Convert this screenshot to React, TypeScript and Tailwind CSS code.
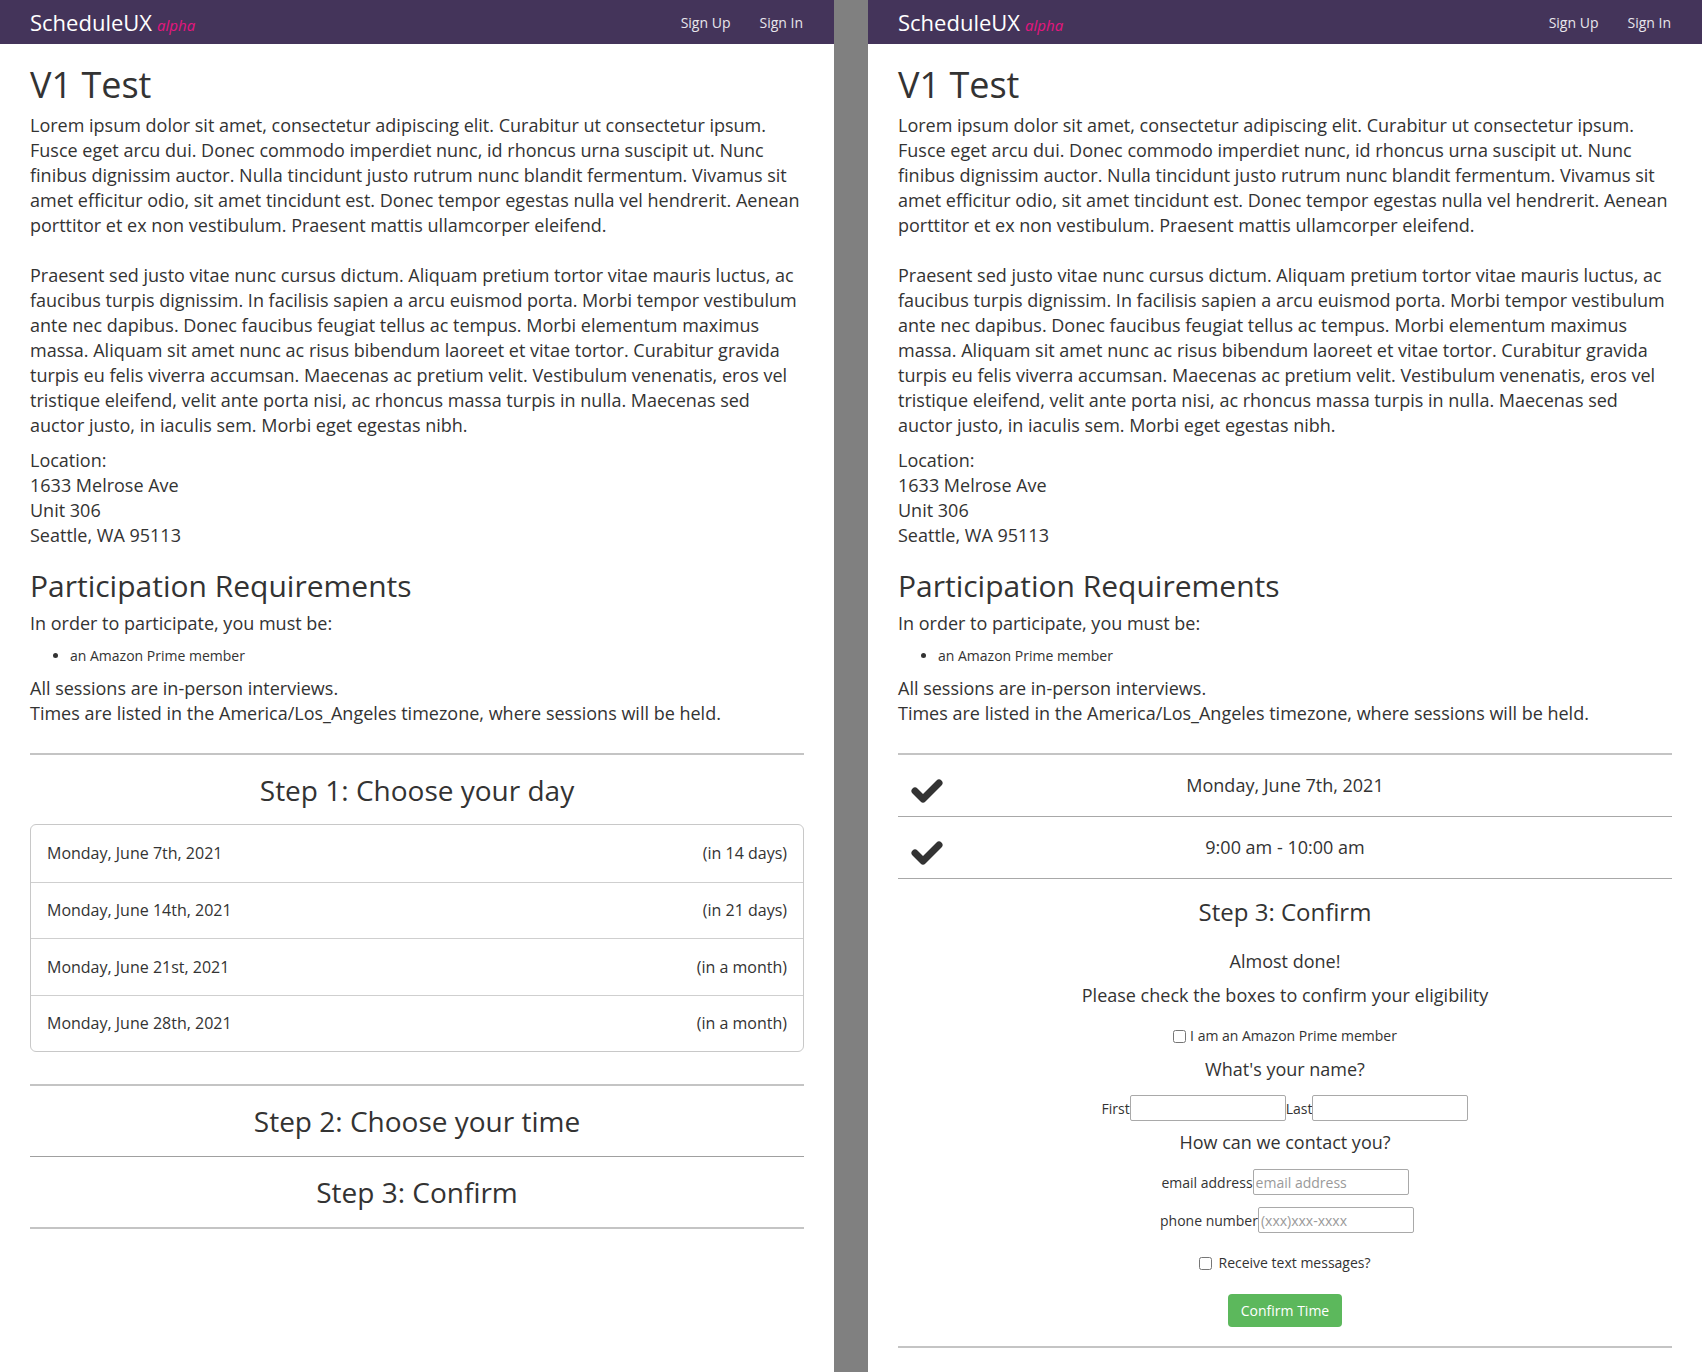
import React from "react";

const LOREM_1 =
  "Lorem ipsum dolor sit amet, consectetur adipiscing elit. Curabitur ut consectetur ipsum. Fusce eget arcu dui. Donec commodo imperdiet nunc, id rhoncus urna suscipit ut. Nunc finibus dignissim auctor. Nulla tincidunt justo rutrum nunc blandit fermentum. Vivamus sit amet efficitur odio, sit amet tincidunt est. Donec tempor egestas nulla vel hendrerit. Aenean porttitor et ex non vestibulum. Praesent mattis ullamcorper eleifend.";

const LOREM_2 =
  "Praesent sed justo vitae nunc cursus dictum. Aliquam pretium tortor vitae mauris luctus, ac faucibus turpis dignissim. In facilisis sapien a arcu euismod porta. Morbi tempor vestibulum ante nec dapibus. Donec faucibus feugiat tellus ac tempus. Morbi elementum maximus massa. Aliquam sit amet nunc ac risus bibendum laoreet et vitae tortor. Curabitur gravida turpis eu felis viverra accumsan. Maecenas ac pretium velit. Vestibulum venenatis, eros vel tristique eleifend, velit ante porta nisi, ac rhoncus massa turpis in nulla. Maecenas sed auctor justo, in iaculis sem. Morbi eget egestas nibh.";

const DAYS = [
  { day: "Monday, June 7th, 2021", rel: "(in 14 days)" },
  { day: "Monday, June 14th, 2021", rel: "(in 21 days)" },
  { day: "Monday, June 21st, 2021", rel: "(in a month)" },
  { day: "Monday, June 28th, 2021", rel: "(in a month)" },
];

function Navbar() {
  return (
    <div className="flex h-[44px] items-center justify-between bg-[#44345a] pl-[30px] pr-[31px]">
      <div className="flex items-baseline gap-[5px]">
        <span className="text-[22px] text-white">ScheduleUX</span>
        <span className="text-[15px] italic text-[#e6157f]">alpha</span>
      </div>
      <div className="flex items-center gap-[29px] text-[14px] text-[#e8e6ec]">
        <span>Sign Up</span>
        <span>Sign In</span>
      </div>
    </div>
  );
}

function Intro() {
  return (
    <>
      <h1 className="mt-[21px] text-[36px] leading-[40px]">V1 Test</h1>
      <p className="mt-[8px] text-[18px] leading-[25px]">{LOREM_1}</p>
      <p className="mt-[25px] text-[18px] leading-[25px]">{LOREM_2}</p>
      <div className="mt-[10px] text-[18px] leading-[25px]">
        <div>Location:</div>
        <div>1633 Melrose Ave</div>
        <div>Unit 306</div>
        <div>Seattle, WA 95113</div>
      </div>
      <h2 className="mt-[21px] text-[30px] leading-[33px]">Participation Requirements</h2>
      <p className="mt-[9px] text-[18px] leading-[25px]">In order to participate, you must be:</p>
      <ul className="mt-[10px] list-disc pl-[40px] text-[14px] leading-[20px]">
        <li>an Amazon Prime member</li>
      </ul>
      <div className="mt-[10px] text-[18px] leading-[25px]">
        <div>All sessions are in-person interviews.</div>
        <div>Times are listed in the America/Los_Angeles timezone, where sessions will be held.</div>
      </div>
      <div className="mt-[27px] border-t-2 border-[#c4c4c4]" />
    </>
  );
}

function Check() {
  return (
    <svg width="32" height="24" viewBox="0 0 32 24" className="text-[#333]">
      <polyline
        points="4,12 12,20 28,4"
        fill="none"
        stroke="currentColor"
        strokeWidth="7"
        strokeLinecap="round"
        strokeLinejoin="round"
      />
    </svg>
  );
}

function ChooseDay() {
  return (
    <div className="flex min-h-[1372px] flex-col bg-white">
      <Navbar />
      <div className="px-[30px]">
        <Intro />
        <h3 className="mt-[19px] text-center text-[28px] leading-[32px]">Step 1: Choose your day</h3>
        <div className="mt-[18px] overflow-hidden rounded-[6px] border border-[#c8c8c8]">
          {DAYS.map((d, i) => (
            <div
              key={d.day}
              className={`flex h-[56.5px] items-center justify-between px-[16px] text-[16px] ${
                i > 0 ? "border-t border-[#cfcfcf]" : ""
              }`}
            >
              <span>{d.day}</span>
              <span>{d.rel}</span>
            </div>
          ))}
        </div>
        <div className="mt-[32px] border-t-2 border-[#c4c4c4]" />
        <h3 className="py-[19px] text-center text-[28px] leading-[32px]">Step 2: Choose your time</h3>
        <div className="border-t border-[#a0a0a0]" />
        <h3 className="py-[19px] text-center text-[28px] leading-[32px]">Step 3: Confirm</h3>
        <div className="border-t-2 border-[#c4c4c4]" />
      </div>
    </div>
  );
}

function Field({ label, placeholder }: { label: string; placeholder?: string }) {
  return (
    <label className="flex items-center text-[14px]">
      <span>{label}</span>
      <input
        type="text"
        placeholder={placeholder}
        className="h-[26px] w-[156px] rounded-[2px] border border-[#a9a9a9] px-[2px] text-[14px] placeholder:text-[#9a9a9a]"
      />
    </label>
  );
}

function Confirm() {
  return (
    <div className="flex min-h-[1372px] flex-col bg-white">
      <Navbar />
      <div className="px-[30px]">
        <Intro />
        <div className="relative flex h-[62px] items-center justify-center border-b border-[#a8a8a8] text-[18px]">
          <span className="absolute left-[13px] top-[24px]">
            <Check />
          </span>
          <span className="-mt-[1px]">Monday, June 7th, 2021</span>
        </div>
        <div className="relative flex h-[62px] items-center justify-center border-b border-[#a8a8a8] text-[18px]">
          <span className="absolute left-[13px] top-[24px]">
            <Check />
          </span>
          <span className="-mt-[1px]">9:00 am - 10:00 am</span>
        </div>
        <div className="flex flex-col items-center">
          <h3 className="mt-[17px] text-[24px] leading-[32px]">Step 3: Confirm</h3>
          <p className="mt-[21px] text-[18px] leading-[25px]">Almost done!</p>
          <p className="mt-[9px] text-[18px] leading-[25px]">Please check the boxes to confirm your eligibility</p>
          <label className="mt-[18px] flex items-center gap-[4px] text-[14px] leading-[20px]">
            <input type="checkbox" className="h-[13px] w-[13px]" />
            <span>I am an Amazon Prime member</span>
          </label>
          <p className="mt-[11px] text-[18px] leading-[25px]">What's your name?</p>
          <div className="mt-[13px] flex items-center">
            <Field label="First" />
            <Field label="Last" />
          </div>
          <p className="mt-[9px] text-[18px] leading-[25px]">How can we contact you?</p>
          <div className="mt-[14px]">
            <Field label="email address" placeholder="email address" />
          </div>
          <div className="mt-[12px] pl-[4px]">
            <Field label="phone number" placeholder="(xxx)xxx-xxxx" />
          </div>
          <label className="mt-[20px] flex items-center gap-[6px] text-[14px] leading-[20px]">
            <input type="checkbox" className="h-[13px] w-[13px]" />
            <span>Receive text messages?</span>
          </label>
          <button
            type="button"
            className="mt-[21px] h-[33px] w-[114px] rounded-[4px] bg-[#5cb85c] text-[14px] text-white"
          >
            Confirm Time
          </button>
        </div>
        <div className="mt-[19px] border-t-2 border-[#c4c4c4]" />
      </div>
    </div>
  );
}

export default function App() {
  return (
    <div className="flex min-h-screen bg-[#808080] text-[#333] [font-family:'Open_Sans',sans-serif]">
      <div className="w-[834px] shrink-0">
        <ChooseDay />
      </div>
      <div className="w-[34px] shrink-0" />
      <div className="w-[834px] shrink-0">
        <Confirm />
      </div>
    </div>
  );
}
